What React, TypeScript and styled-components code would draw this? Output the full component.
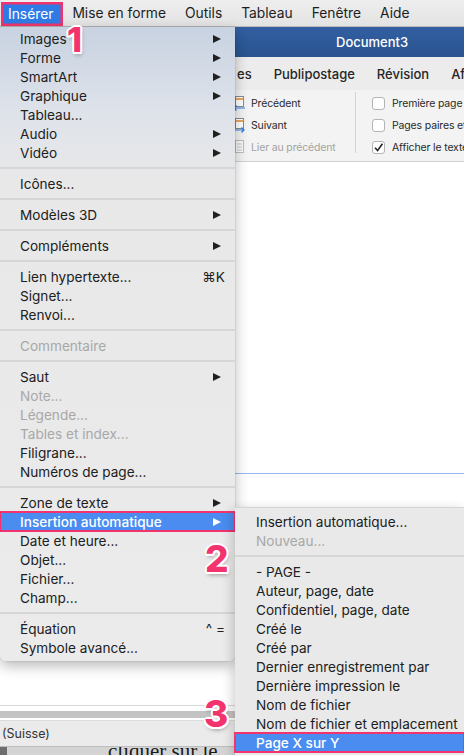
import React from 'react';
import styled, { createGlobalStyle, css } from 'styled-components';

const PINK = '#f2336e';
const HILITE = '#4a8cf0';

const GlobalStyle = createGlobalStyle`
  * { box-sizing: border-box; }
  html, body { margin: 0; padding: 0; background: #fff; }
  body {
    font-family: Inter, "Noto Sans", "Liberation Sans", sans-serif;
    -webkit-font-smoothing: antialiased;
  }
`;

const Screen = styled.div`
  position: relative;
  width: 464px;
  height: 755px;
  overflow: hidden;
  display: flex;
  flex-direction: column;
`;

/* ---------- top menu bar ---------- */

const MenuBar = styled.div`
  height: 27px;
  flex: none;
  display: flex;
  align-items: stretch;
  gap: 2px;
  padding-left: 1px;
  background: linear-gradient(#eeeeee, #e3e3e3);
  border-bottom: 1px solid #bcbcbc;
  font-size: 13.8px;
  color: #1d1d1d;
`;

const BarItem = styled.div<{ $active?: boolean }>`
  display: flex;
  align-items: center;
  padding: 0 10px 0 7px;
  ${p =>
    p.$active &&
    css`
      margin-top: 2px;
      background: #2f7be6;
      color: #fff;
      box-shadow: inset 0 0 0 2.5px ${PINK};
    `}
`;

/* ---------- Word window behind ---------- */

const Window = styled.div`
  flex: 1;
  min-height: 0;
  display: flex;
  flex-direction: column;
`;

const TitleBar = styled.div`
  height: 30px;
  flex: none;
  display: flex;
  align-items: center;
  padding-left: 336px;
  background: linear-gradient(#325fa2, #29548f);
  color: #fff;
  font-size: 13px;
  font-weight: 500;
`;

const RibbonTabs = styled.div`
  height: 33px;
  flex: none;
  display: flex;
  align-items: center;
  gap: 22px;
  padding-left: 237px;
  background: #ececec;
  font-size: 13px;
  font-weight: 500;
  color: #262626;
  white-space: nowrap;
`;

const RibbonBody = styled.div`
  height: 72px;
  flex: none;
  display: flex;
  padding: 2px 0 0 232px;
  background: #f3f3f3;
  border-bottom: 1px solid #d2d2d2;
  font-size: 10.5px;
  letter-spacing: -0.15px;
  color: #2a2a2a;
  white-space: nowrap;
`;

const RibbonGroup = styled.div<{ $width?: number; $pad?: number }>`
  flex: none;
  display: flex;
  flex-direction: column;
  width: ${p => (p.$width ? `${p.$width}px` : 'auto')};
  padding-left: ${p => p.$pad ?? 0}px;
`;

const RibbonRow = styled.div<{ $disabled?: boolean; $gap?: number }>`
  height: 22px;
  display: flex;
  align-items: center;
  gap: ${p => p.$gap ?? 5}px;
  color: ${p => (p.$disabled ? '#a3a3a3' : 'inherit')};
`;

const RibbonSep = styled.div`
  flex: none;
  width: 1px;
  margin: 0 0 8px;
  background: #d3d3d3;
`;

const Check = styled.span`
  width: 13px;
  height: 13px;
  flex: none;
  border: 1px solid #b4b4b4;
  border-radius: 3px;
  background: #fff;
  display: flex;
  align-items: center;
  justify-content: center;
`;

const DocArea = styled.div`
  flex: 1;
  min-height: 0;
  display: flex;
  flex-direction: column;
  background: #fff;
`;

const PageTop = styled.div`
  height: 311px;
  flex: none;
`;

const HeaderLine = styled.div`
  height: 1px;
  flex: none;
  background: #9ab6ec;
`;

const Rule = styled.div`
  height: 1px;
  flex: none;
  margin-bottom: 5px;
  background: #d9d9d9;
`;

const HScroll = styled.div`
  height: 7px;
  flex: none;
  margin-bottom: 2px;
  background: #c3c3c3;
`;

const StatusBar = styled.div`
  height: 26px;
  flex: none;
  display: flex;
  align-items: center;
  padding-left: 2px;
  background: #ebebeb;
  border-top: 1px solid #dcdcdc;
  font-size: 12.5px;
  color: #333;
`;

const BelowStrip = styled.div`
  height: 9px;
  flex: none;
  overflow: hidden;
  display: flex;
  background: #d4d4d4;
  border-top: 1px solid #bdbdbd;
`;

const StripEdge = styled.div`
  width: 7px;
  background: #6e6e6e;
`;

const SerifText = styled.div`
  margin: -7px 0 0 101px;
  font-family: "Liberation Serif", serif;
  font-size: 21px;
  line-height: 22px;
  color: #1a1a1a;
  white-space: nowrap;
`;

/* ---------- dropdown menus ---------- */

const Dropdown = styled.div<{ $top: number; $left: number; $width: number; $sub?: boolean }>`
  position: absolute;
  top: ${p => p.$top}px;
  left: ${p => p.$left}px;
  width: ${p => p.$width}px;
  z-index: ${p => (p.$sub ? 3 : 2)};
  font-size: 13.6px;
  color: #202020;
  white-space: nowrap;
  ${p =>
    p.$sub
      ? css`
          padding: 4px 0 4px;
          background: #e9e9e9;
          border-top: 1px solid #d4d4d4;
          box-shadow: -3px 2px 10px rgba(0, 0, 0, 0.18);
        `
      : css`
          padding: 2px 0 4px;
          border-radius: 0 0 6px 6px;
          background: linear-gradient(
            180deg,
            #c8d2e1 0px,
            #dde2ea 80px,
            #e8e8e9 150px,
            #ebebeb 100%
          );
          box-shadow: 0 5px 14px rgba(0, 0, 0, 0.28), 0 0 0 0.5px rgba(0, 0, 0, 0.12);
        `}
`;

const Item = styled.div<{ $disabled?: boolean; $active?: boolean; $pad: number }>`
  position: relative;
  height: 19px;
  display: flex;
  align-items: center;
  padding: 0 10px 0 ${p => p.$pad}px;
  color: ${p => (p.$disabled ? '#a8a8a8' : 'inherit')};
  ${p =>
    p.$active &&
    css`
      z-index: 1;
      background: ${HILITE};
      color: #fff;
      font-weight: 500;
      outline: 2.5px solid ${PINK};
      outline-offset: -1px;
    `}
`;

const ItemLabel = styled.span`
  flex: 1;
`;

const Shortcut = styled.span`
  color: inherit;
`;

const Arrow = styled.span`
  width: 0;
  height: 0;
  margin-right: 4px;
  border-left: 8px solid currentColor;
  border-top: 4.5px solid transparent;
  border-bottom: 4.5px solid transparent;
`;

const Sep = styled.div`
  height: 2px;
  margin: 5px 0;
  background: #d6d6d6;
`;

const Badge = styled.span<{ $top: number; $left: number; $size: number }>`
  position: absolute;
  top: ${p => p.$top}px;
  left: ${p => p.$left}px;
  z-index: 5;
  font-family: Inter, "Liberation Sans", sans-serif;
  font-weight: 800;
  font-size: ${p => p.$size}px;
  line-height: 1;
  color: ${PINK};
  text-shadow:
    2px 0 0 #fff, -2px 0 0 #fff, 0 2px 0 #fff, 0 -2px 0 #fff,
    1.5px 1.5px 0 #fff, -1.5px 1.5px 0 #fff, 1.5px -1.5px 0 #fff, -1.5px -1.5px 0 #fff,
    1px 3px 4px rgba(0, 0, 0, 0.35);
`;

/* ---------- data ---------- */

type Entry =
  | 'sep'
  | { label: string; arrow?: boolean; shortcut?: string; disabled?: boolean; active?: boolean };

const insertMenu: Entry[] = [
  { label: 'Images', arrow: true },
  { label: 'Forme', arrow: true },
  { label: 'SmartArt', arrow: true },
  { label: 'Graphique', arrow: true },
  { label: 'Tableau...' },
  { label: 'Audio', arrow: true },
  { label: 'Vidéo', arrow: true },
  'sep',
  { label: 'Icônes...' },
  'sep',
  { label: 'Modèles 3D', arrow: true },
  'sep',
  { label: 'Compléments', arrow: true },
  'sep',
  { label: 'Lien hypertexte...', shortcut: '⌘K' },
  { label: 'Signet...' },
  { label: 'Renvoi...' },
  'sep',
  { label: 'Commentaire', disabled: true },
  'sep',
  { label: 'Saut', arrow: true },
  { label: 'Note...', disabled: true },
  { label: 'Légende...', disabled: true },
  { label: 'Tables et index...', disabled: true },
  { label: 'Filigrane...' },
  { label: 'Numéros de page...' },
  'sep',
  { label: 'Zone de texte', arrow: true },
  { label: 'Insertion automatique', arrow: true, active: true },
  { label: 'Date et heure...' },
  { label: 'Objet...' },
  { label: 'Fichier...' },
  { label: 'Champ...' },
  'sep',
  { label: 'Équation', shortcut: '^ =' },
  { label: 'Symbole avancé...' },
];

const autoTextMenu: Entry[] = [
  { label: 'Insertion automatique...' },
  { label: 'Nouveau...', disabled: true },
  'sep',
  { label: '- PAGE -' },
  { label: 'Auteur, page, date' },
  { label: 'Confidentiel, page, date' },
  { label: 'Créé le' },
  { label: 'Créé par' },
  { label: 'Dernier enregistrement par' },
  { label: 'Dernière impression le' },
  { label: 'Nom de fichier' },
  { label: 'Nom de fichier et emplacement' },
  { label: 'Page X sur Y', active: true },
];

const MenuList: React.FC<{ entries: Entry[]; pad: number }> = ({ entries, pad }) => (
  <>
    {entries.map((e, i) =>
      e === 'sep' ? (
        <Sep key={i} />
      ) : (
        <Item key={i} $pad={pad} $disabled={e.disabled} $active={e.active}>
          <ItemLabel>{e.label}</ItemLabel>
          {e.shortcut && <Shortcut>{e.shortcut}</Shortcut>}
          {e.arrow && <Arrow />}
        </Item>
      )
    )}
  </>
);

/* ---------- ribbon icons ---------- */

const PrevIcon = () => (
  <svg width="14" height="16" viewBox="0 0 14 16">
    <rect x="3.5" y="1.5" width="8" height="10" fill="#fff" stroke="#8a8a8a" />
    <line x1="3.5" y1="4" x2="11.5" y2="4" stroke="#e58a2c" strokeWidth="1.5" />
    <path d="M13 13 H2 M4.5 10.5 L2 13 L4.5 15.5" stroke="#2b7de0" strokeWidth="1.2" fill="none" />
  </svg>
);

const NextIcon = () => (
  <svg width="14" height="16" viewBox="0 0 14 16">
    <rect x="3.5" y="1.5" width="8" height="10" fill="#fff" stroke="#8a8a8a" />
    <line x1="3.5" y1="4" x2="11.5" y2="4" stroke="#e58a2c" strokeWidth="1.5" />
    <path d="M1 13 H12 M9.5 10.5 L12 13 L9.5 15.5" stroke="#2b7de0" strokeWidth="1.2" fill="none" />
  </svg>
);

const LinkIcon = () => (
  <svg width="14" height="16" viewBox="0 0 14 16">
    <rect x="3.5" y="1.5" width="8" height="12" fill="#fafafa" stroke="#bdbdbd" />
    <path d="M5 5 H10 M5 8 H10 M5 11 H10" stroke="#c6c6c6" />
  </svg>
);

const Tick = () => (
  <svg width="11" height="11" viewBox="0 0 11 11">
    <path d="M2 5.8 L4.6 8.6 L9.4 1.8" stroke="#222" strokeWidth="1.6" fill="none" />
  </svg>
);

const App: React.FC = () => (
  <>
    <GlobalStyle />
    <Screen>
      <MenuBar>
        <BarItem $active>Insérer</BarItem>
        <BarItem>Mise en forme</BarItem>
        <BarItem>Outils</BarItem>
        <BarItem>Tableau</BarItem>
        <BarItem>Fenêtre</BarItem>
        <BarItem>Aide</BarItem>
      </MenuBar>

      <Window>
        <TitleBar>Document3</TitleBar>
        <RibbonTabs>
          <span>es</span>
          <span>Publipostage</span>
          <span>Révision</span>
          <span>Affichage</span>
        </RibbonTabs>
        <RibbonBody>
          <RibbonGroup $width={123}>
            <RibbonRow>
              <PrevIcon />
              Précédent
            </RibbonRow>
            <RibbonRow>
              <NextIcon />
              Suivant
            </RibbonRow>
            <RibbonRow $disabled>
              <LinkIcon />
              Lier au précédent
            </RibbonRow>
          </RibbonGroup>
          <RibbonSep />
          <RibbonGroup $pad={16}>
            <RibbonRow $gap={7}>
              <Check />
              Première page
            </RibbonRow>
            <RibbonRow $gap={7}>
              <Check />
              Pages paires et impaires
            </RibbonRow>
            <RibbonRow $gap={7}>
              <Check>
                <Tick />
              </Check>
              Afficher le texte
            </RibbonRow>
          </RibbonGroup>
        </RibbonBody>
        <DocArea>
          <PageTop />
          <HeaderLine />
        </DocArea>
        <Rule />
        <HScroll />
        <StatusBar>(Suisse)</StatusBar>
        <BelowStrip>
          <StripEdge />
          <SerifText>cliquer sur le</SerifText>
        </BelowStrip>
      </Window>

      <Dropdown $top={27} $left={0} $width={235}>
        <MenuList entries={insertMenu} pad={20} />
      </Dropdown>

      <Dropdown $top={507} $left={235} $width={229} $sub>
        <MenuList entries={autoTextMenu} pad={21} />
      </Dropdown>

      <Badge $top={23} $left={67} $size={34}>1</Badge>
      <Badge $top={540} $left={205} $size={37}>2</Badge>
      <Badge $top={695} $left={204} $size={37}>3</Badge>
    </Screen>
  </>
);

export default App;
